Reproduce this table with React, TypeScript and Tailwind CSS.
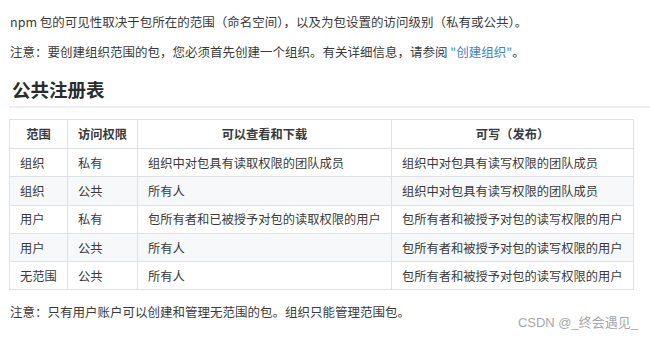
import React from "react";

const rows = [
  ["组织", "私有", "组织中对包具有读取权限的团队成员", "组织中对包具有读写权限的团队成员"],
  ["组织", "公共", "所有人", "组织中对包具有读写权限的团队成员"],
  ["用户", "私有", "包所有者和已被授予对包的读取权限的用户", "包所有者和被授予对包的读写权限的用户"],
  ["用户", "公共", "所有人", "包所有者和被授予对包的读写权限的用户"],
  ["无范围", "公共", "所有人", "包所有者和被授予对包的读写权限的用户"],
];

export default function App() {
  return (
    <div className="relative w-[650px] h-[339px] overflow-hidden bg-white text-[#3a3a3a] font-['Noto_Sans_CJK_SC','Noto_Sans',sans-serif]">
      <div className="pl-[9px] pt-[13px]">
        <p className="text-[12.5px] leading-[18px] pl-px">
          npm 包的可见性取决于包所在的范围（命名空间），以及为包设置的访问级别（私有或公共）。
        </p>
        <p className="mt-[12px] text-[12.5px] leading-[18px] pl-px">
          注意：要创建组织范围的包，您必须首先创建一个组织。有关详细信息，请参阅 <span className="text-[#4183c4]">"创建组织"</span>。
        </p>
        <h2 className="mt-[15px] pb-[4px] border-b-2 border-[#eeeeee] text-[18.5px] leading-[26px] font-bold text-[#2b2b2b] pl-[3px]">
          公共注册表
        </h2>
        <table className="mt-[11px] table-fixed border-collapse w-[624px] text-[12.25px] leading-[18px]">
          <colgroup>
            <col className="w-[58px]" />
            <col className="w-[70px]" />
            <col className="w-[254px]" />
            <col className="w-[242px]" />
          </colgroup>
          <thead>
            <tr className="h-[29px]">
              <th className="border border-[#dfe2e5] px-[4px] text-center font-bold whitespace-nowrap">范围</th>
              <th className="border border-[#dfe2e5] px-[4px] text-center font-bold whitespace-nowrap">访问权限</th>
              <th className="border border-[#dfe2e5] px-[4px] text-center font-bold whitespace-nowrap">可以查看和下载</th>
              <th className="border border-[#dfe2e5] px-[4px] text-center font-bold whitespace-nowrap">可写（发布）</th>
            </tr>
          </thead>
          <tbody>
            {rows.map((r, i) => (
              <tr key={i} className={i % 2 === 1 ? "h-[28.3px] bg-[#f6f8fa]" : "h-[28.3px] bg-white"}>
                {r.map((c, j) => (
                  <td key={j} className="border border-[#dfe2e5] px-[10px] whitespace-nowrap">
                    {c}
                  </td>
                ))}
              </tr>
            ))}
          </tbody>
        </table>
        <p className="mt-[13px] text-[12.5px] leading-[18px] pl-px">
          注意：只有用户账户可以创建和管理无范围的包。组织只能管理范围包。
        </p>
      </div>
      <div className="absolute right-[12px] bottom-[7px] text-[13px] leading-[18px] text-[#a8a8a8] font-['Liberation_Sans','Noto_Sans_CJK_SC',sans-serif]">
        CSDN @_终会遇见_
      </div>
    </div>
  );
}
